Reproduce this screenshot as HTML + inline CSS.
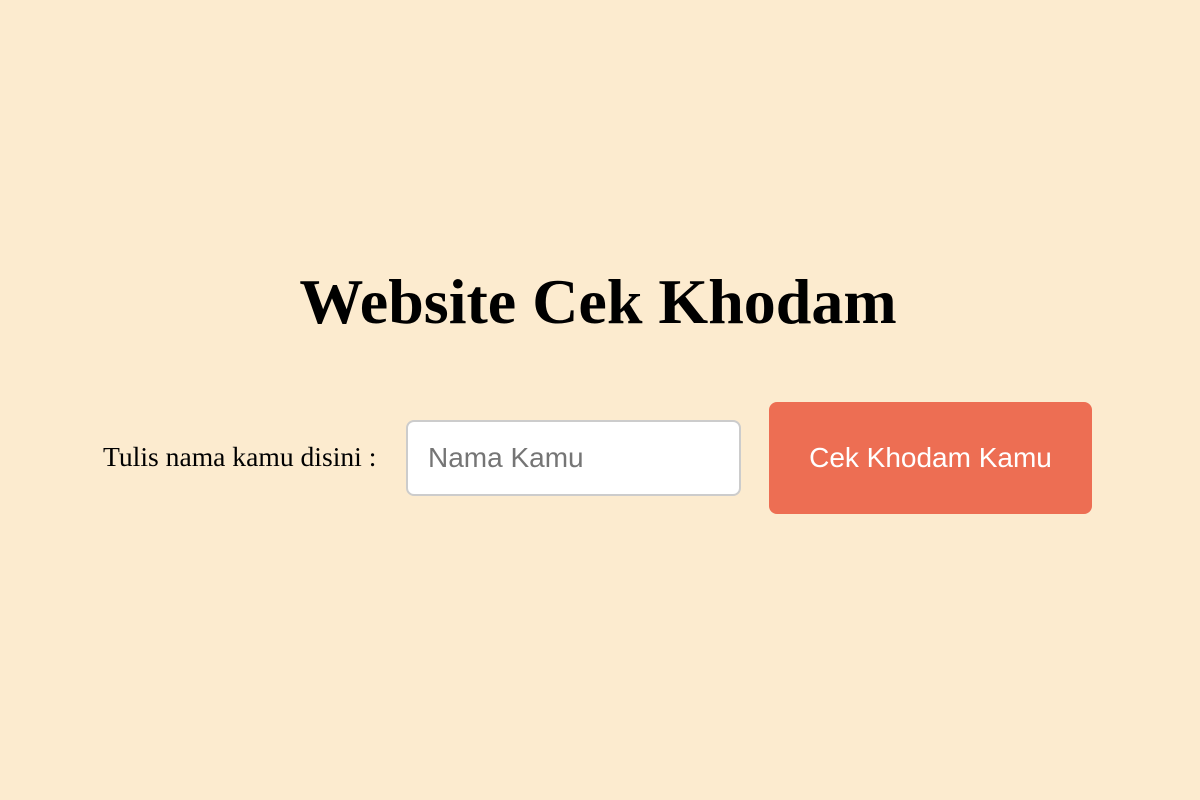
<!DOCTYPE html>
<html><head><style>
html,body{margin:0;padding:0;width:1200px;height:800px;background:#fcebcf;overflow:hidden}
h1{position:absolute;left:0;width:1200px;top:264px;margin:0;text-align:center;font:bold 64px/76px "Liberation Serif",serif;color:#000;padding-right:4px;box-sizing:border-box}
.lbl{position:absolute;left:103px;top:443px;font:27.6px/28px "Liberation Serif",serif;color:#000;white-space:nowrap}
.inp{position:absolute;left:406px;top:420px;width:335px;height:76px;border:2px solid #ccc;border-radius:8px;background:#fff;box-sizing:border-box}
.inp span{position:absolute;left:20px;top:20px;font:28px/32px "Liberation Sans",sans-serif;color:#757575}
.btn{position:absolute;left:769px;top:402px;width:323px;height:112px;background:#ed6e53;border-radius:8px;color:#fff;font:28px/112px "Liberation Sans",sans-serif;text-align:center}
</style></head><body>
<h1>Website Cek Khodam</h1>
<div class="lbl">Tulis nama kamu disini :</div>
<div class="inp"><span>Nama Kamu</span></div>
<div class="btn">Cek Khodam Kamu</div>
</body></html>
